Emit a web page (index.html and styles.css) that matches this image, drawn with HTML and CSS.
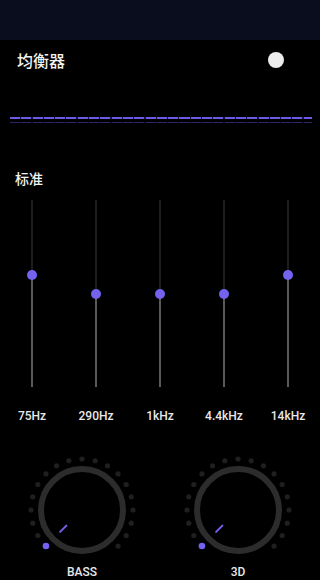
FILE: index.html
```html
<!DOCTYPE html>
<html lang="zh">
<head>
<meta charset="utf-8">
<link rel="stylesheet" href="styles.css">
</head>
<body>
<div class="statusbar"></div>
<div class="title-row">
  <span class="title">均衡器</span>
  <span class="toggle"></span>
</div>
<div class="viz">
  <div class="viz-line main"></div>
  <div class="viz-line shadow"></div>
</div>
<div class="preset">标准</div>
<div class="sliders">
  <div class="slider"><div class="track"><div class="fill" style="top:75px"></div><div class="thumb" style="top:75px"></div></div></div>
  <div class="slider"><div class="track"><div class="fill" style="top:94px"></div><div class="thumb" style="top:94px"></div></div></div>
  <div class="slider"><div class="track"><div class="fill" style="top:94px"></div><div class="thumb" style="top:94px"></div></div></div>
  <div class="slider"><div class="track"><div class="fill" style="top:94px"></div><div class="thumb" style="top:94px"></div></div></div>
  <div class="slider"><div class="track"><div class="fill" style="top:75px"></div><div class="thumb" style="top:75px"></div></div></div>
</div>
<div class="freqs">
  <span>75Hz</span><span>290Hz</span><span>1kHz</span><span>4.4kHz</span><span>14kHz</span>
</div>
<div class="knobs">
  <div class="knob">
    <svg width="110" height="110" viewBox="0 0 110 110">
      <g fill="#1f1f1f">
        <circle cx="10.83" cy="80.5" r="2.6"/><circle cx="5.74" cy="68.2" r="2.6"/><circle cx="4" cy="55" r="2.6"/>
        <circle cx="5.74" cy="41.8" r="2.6"/><circle cx="10.83" cy="29.5" r="2.6"/><circle cx="18.94" cy="18.94" r="2.6"/>
        <circle cx="29.5" cy="10.83" r="2.6"/><circle cx="41.8" cy="5.74" r="2.6"/><circle cx="55" cy="4" r="2.6"/>
        <circle cx="68.2" cy="5.74" r="2.6"/><circle cx="80.5" cy="10.83" r="2.6"/><circle cx="91.06" cy="18.94" r="2.6"/>
        <circle cx="99.17" cy="29.5" r="2.6"/><circle cx="104.26" cy="41.8" r="2.6"/><circle cx="106" cy="55" r="2.6"/>
        <circle cx="104.26" cy="68.2" r="2.6"/><circle cx="99.17" cy="80.5" r="2.6"/><circle cx="91.06" cy="91.06" r="2.6"/>
      </g>
      <circle cx="18.94" cy="91.06" r="3.3" fill="#7462f0"/>
      <circle cx="55" cy="55" r="41" fill="none" stroke="#2c2c2c" stroke-width="6"/>
      <line x1="39.4" y1="70.6" x2="33.1" y2="76.9" stroke="#7462f0" stroke-width="2" stroke-linecap="round"/>
    </svg>
    <span class="knob-label">BASS</span>
  </div>
  <div class="knob">
    <svg width="110" height="110" viewBox="0 0 110 110">
      <g fill="#1f1f1f">
        <circle cx="10.83" cy="80.5" r="2.6"/><circle cx="5.74" cy="68.2" r="2.6"/><circle cx="4" cy="55" r="2.6"/>
        <circle cx="5.74" cy="41.8" r="2.6"/><circle cx="10.83" cy="29.5" r="2.6"/><circle cx="18.94" cy="18.94" r="2.6"/>
        <circle cx="29.5" cy="10.83" r="2.6"/><circle cx="41.8" cy="5.74" r="2.6"/><circle cx="55" cy="4" r="2.6"/>
        <circle cx="68.2" cy="5.74" r="2.6"/><circle cx="80.5" cy="10.83" r="2.6"/><circle cx="91.06" cy="18.94" r="2.6"/>
        <circle cx="99.17" cy="29.5" r="2.6"/><circle cx="104.26" cy="41.8" r="2.6"/><circle cx="106" cy="55" r="2.6"/>
        <circle cx="104.26" cy="68.2" r="2.6"/><circle cx="99.17" cy="80.5" r="2.6"/><circle cx="91.06" cy="91.06" r="2.6"/>
      </g>
      <circle cx="18.94" cy="91.06" r="3.3" fill="#7462f0"/>
      <circle cx="55" cy="55" r="41" fill="none" stroke="#2c2c2c" stroke-width="6"/>
      <line x1="39.4" y1="70.6" x2="33.1" y2="76.9" stroke="#7462f0" stroke-width="2" stroke-linecap="round"/>
    </svg>
    <span class="knob-label">3D</span>
  </div>
</div>
</body>
</html>
```
FILE: styles.css
```css
html, body {
  margin: 0;
  padding: 0;
  background: #000;
  color: #fff;
  font-family: Roboto, "Noto Sans", "Noto Sans CJK SC", sans-serif;
  overflow: hidden;
}
.statusbar {
  height: 40px;
  background: #0a0d1d;
}
.title-row {
  height: 40px;
  display: flex;
  align-items: center;
  justify-content: space-between;
  padding: 0 36px 0 17px;
}
.title {
  font-family: "Noto Sans CJK SC", sans-serif;
  font-size: 16px;
  font-weight: 500;
  color: #f2f2f2;
}
.toggle {
  width: 16px;
  height: 16px;
  border-radius: 50%;
  background: #ececec;
}
.viz {
  margin: 37px 8px 0 10px;
}
.viz-line.main {
  height: 2px;
  background: repeating-linear-gradient(90deg, #6d5ae6 0 10px, #1a1440 10px 11.3px);
}
.viz-line.shadow {
  height: 1px;
  margin-top: 3px;
  background: repeating-linear-gradient(90deg, #2f2668 0 10px, #0c0a1c 10px 11.3px);
}
.preset {
  margin-top: 45px;
  padding-left: 15px;
  height: 20px;
  line-height: 20px;
  font-family: "Noto Sans CJK SC", sans-serif;
  font-size: 14px;
  font-weight: 500;
  color: #f2f2f2;
}
.sliders {
  margin-top: 12px;
  display: grid;
  grid-template-columns: repeat(5, 64px);
  height: 187px;
}
.slider {
  display: flex;
  justify-content: center;
}
.track {
  position: relative;
  width: 2px;
  height: 187px;
  background: #1e1e1e;
}
.fill {
  position: absolute;
  left: 0;
  right: 0;
  bottom: 0;
  background: #5a5a5a;
}
.thumb {
  position: absolute;
  left: 50%;
  width: 10px;
  height: 10px;
  margin: -5px 0 0 -5px;
  border-radius: 50%;
  background: #7462f0;
}
.freqs {
  margin-top: 21px;
  display: grid;
  grid-template-columns: repeat(5, 64px);
  height: 16px;
  line-height: 16px;
  font-size: 12px;
  font-weight: 500;
  color: #e8e8e8;
}
.freqs span {
  text-align: center;
}
.knobs {
  margin-top: 31px;
  display: flex;
  justify-content: space-between;
  padding: 0 27px;
}
.knob {
  display: flex;
  flex-direction: column;
  align-items: center;
  width: 110px;
}
.knob svg {
  display: block;
}
.knob-label {
  height: 14px;
  line-height: 14px;
  font-size: 12px;
  font-weight: 500;
  color: #e8e8e8;
}
```
